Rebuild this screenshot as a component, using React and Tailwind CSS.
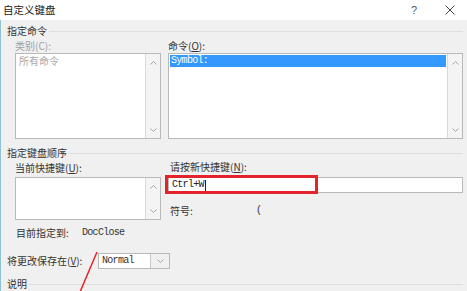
import React from "react";

const cjk = "font-['Noto_Sans_CJK_SC','Noto_Sans',sans-serif]";
const mono = "font-['Liberation_Mono','Noto_Sans_CJK_SC',monospace] text-[10px] tracking-[-0.7px]";

function Up() {
  return (
    <svg width="7" height="4" viewBox="0 0 7 4" className="block">
      <polyline points="0.5,3.5 3.5,0.5 6.5,3.5" fill="none" stroke="#a6a6a6" strokeWidth="1" />
    </svg>
  );
}
function Down() {
  return (
    <svg width="7" height="4" viewBox="0 0 7 4" className="block">
      <polyline points="0.5,0.5 3.5,3.5 6.5,0.5" fill="none" stroke="#a6a6a6" strokeWidth="1" />
    </svg>
  );
}

function ListBox({ h, children }) {
  return (
    <div className={`flex border border-[#b9b9b9] bg-white ${h}`}>
      <div className="flex-1 p-[1px] min-w-0">{children}</div>
      <div className="w-[15px] bg-[#f4f4f4] border-l border-[#dadada] flex flex-col items-center justify-between pt-[7px] pb-[6px]">
        <Up />
        <Down />
      </div>
    </div>
  );
}

function Header({ children }) {
  return (
    <div className="flex items-center h-[12px] leading-[12px] text-[10px] text-[#333]">
      <span>{children}</span>
      <div className="flex-1 h-px bg-[#dedede] ml-[2px]" />
    </div>
  );
}

export default function App() {
  return (
    <div className={`relative w-[467px] h-[291px] overflow-hidden bg-[#f0f0f0] text-[#333] ${cjk}`}>
      {/* title bar */}
      <div className="h-[20px] bg-white flex items-center pl-[3px]">
        <span className="text-[10.5px] leading-[12px] text-[#222]">自定义键盘</span>
        <span className="ml-auto mr-[28px] text-[11px] leading-[12px] text-[#555] font-['Liberation_Sans',sans-serif]">?</span>
        <svg width="10" height="10" viewBox="0 0 10 10" className="mr-[12px]">
          <line x1="0.5" y1="0.5" x2="9.5" y2="9.5" stroke="#444" strokeWidth="1" />
          <line x1="9.5" y1="0.5" x2="0.5" y2="9.5" stroke="#444" strokeWidth="1" />
        </svg>
      </div>

      <div className="pl-[7px] pr-[4px]">
        <div className="mt-[5px]">
          <Header>指定命令</Header>
        </div>

        <div className="pl-[8px] grid grid-cols-[146px_295px] gap-x-[7px]">
          <div>
            <div className="mt-[3px] h-[12px] leading-[12px] text-[10px] text-[#a0a0a0]">类别(C):</div>
            <div className="mt-[1px]">
              <ListBox h="h-[86px]">
                <div className="h-[12px] leading-[12px] text-[10px] text-[#a8a8a8] pl-[2px]">所有命令</div>
              </ListBox>
            </div>
          </div>
          <div>
            <div className="mt-[3px] h-[12px] leading-[12px] text-[10px]">
              命令(<span className="underline">O</span>):
            </div>
            <div className="mt-[1px]">
              <ListBox h="h-[86px]">
                <div className={`h-[12px] leading-[12px] bg-[#3399ff] text-white pl-[1px] ${mono}`}>Symbol:</div>
              </ListBox>
            </div>
          </div>
        </div>

        <div className="mt-[8px]">
          <Header>指定键盘顺序</Header>
        </div>

        <div className="pl-[8px] grid grid-cols-[146px_295px] gap-x-[7px]">
          <div>
            <div className="mt-[3px] h-[12px] leading-[12px] text-[10px]">
              当前快捷键(<span className="underline">U</span>):
            </div>
            <div className="mt-[3px]">
              <ListBox h="h-[43px]" />
            </div>
            <div className="mt-[7px] h-[12px] leading-[12px] text-[10px] flex pl-[1px]">
              <span className="w-[66px]">目前指定到:</span>
              <span className={mono}>DocClose</span>
            </div>
          </div>
          <div>
            <div className="mt-[2px] h-[12px] leading-[12px] text-[10px] pl-[2px]">
              请按新快捷键(<span className="underline">N</span>):
            </div>
            <div className="mt-[4px] h-[16px] border border-[#b9b9b9] bg-white flex items-center pl-[3px]">
              <span className={`leading-[12px] text-[#222] ${mono}`}>Ctrl+W</span>
              <span className="w-px h-[11px] bg-[#222] ml-[1px]" />
            </div>
            <div className="mt-[12px] h-[12px] leading-[12px] text-[10px] flex pl-[2px]">
              <span className="w-[86px]">符号:</span>
              <span className={mono}>(</span>
            </div>
          </div>
        </div>

        <div className="mt-[14px] flex items-center h-[16px]">
          <span className="w-[91px] text-[10px] leading-[12px]">
            将更改保存在(<span className="underline">V</span>):
          </span>
          <div className="flex h-[16px] border border-[#b9b9b9] bg-white">
            <div className={`w-[51px] flex items-center pl-[3px] leading-[12px] ${mono}`}>Normal</div>
            <div className="w-[19px] border-l border-[#c8c8c8] bg-[#f0f0f0] flex items-center justify-center">
              <Down />
            </div>
          </div>
        </div>

        <div className="mt-[9px]">
          <Header>说明</Header>
        </div>
      </div>

      {/* window frame edge */}
      <div className="absolute left-0 top-[20px] bottom-0 w-px bg-[#8fc3d2]" />

      {/* red annotation box */}
      <div className="absolute left-[165px] top-[175px] w-[153px] h-[19px] border-[3px] border-[#e3242b]" />

      {/* red annotation arrow line */}
      <svg className="absolute left-0 top-0" width="467" height="291">
        <line x1="97" y1="252" x2="80" y2="292" stroke="#e3242b" strokeWidth="1.5" />
      </svg>
    </div>
  );
}
